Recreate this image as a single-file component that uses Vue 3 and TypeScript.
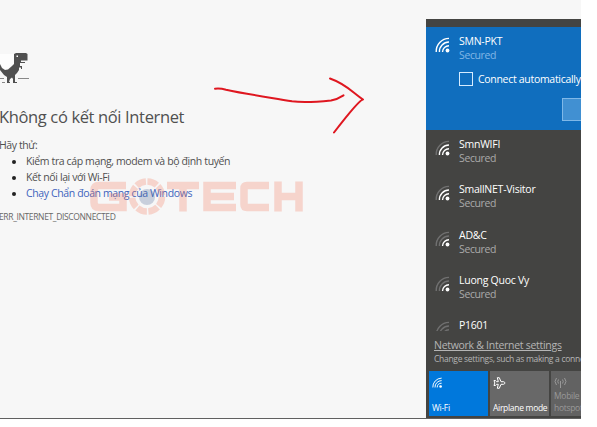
<script setup lang="ts">
interface Network { name: string; strength: number }
const networks: Network[] = [
  { name: 'SmnWIFI', strength: 3 },
  { name: 'SmallNET-Visitor', strength: 3 },
  { name: 'AD&C', strength: 2 },
  { name: 'Luong Quoc Vy', strength: 2 },
]
// Signal arcs, from the innermost to the outermost.
const arcs: string[] = [
  'M7.5 15A6.5 6.5 0 0 1 14 8.8',
  'M4.4 15A9.6 9.6 0 0 1 14 5',
  'M1.2 15A13 13 0 0 1 14 1.4',
]
</script>

<template>
  <main class="screen">
    <section class="page">
      <svg class="dino" width="30" height="34" viewBox="0 0 30 34">
        <path fill="#fdfdfd" d="M0 3H14V12L8 18L4 18L0 13Z" />
        <path fill="#505050" d="M16 2H26L27.500 3V9.500H21V11H25V12H20V15H22V18H21V16.500H19V19L17 22L15 24V31H17V32H13V28L12 26.500L10 28L9 31H10V32H7V26L4 24L0 19V13L2 17L5 19L8 18.500L12 15L14 13V3Z" />
        <path fill="#fff" d="M16.500 4.500H18V6H16.500Z" />
        <path fill="#888" d="M0 27h4v1H0zM18 27h11v1H18zM2 31h3v1H2z" />
      </svg>
      <h1 class="title">Không có kết nối Internet</h1>
      <p class="try">Hãy thử:</p>
      <ul class="tips">
        <li>Kiểm tra cáp mạng, modem và bộ định tuyến</li>
        <li>Kết nối lại với Wi-Fi</li>
        <li><a>Chạy Chẩn đoán mạng của Windows</a></li>
      </ul>
      <p class="code">ERR_INTERNET_DISCONNECTED</p>
    </section>

    <svg class="watermark" width="216" height="40" viewBox="0 0 216 40">
      <g fill="none" stroke="#f47b61" stroke-width="7.5">
        <path d="M37 8.500H10Q5 8.500 5 13.500V25.500Q5 30.500 10 30.500H34V20H20" />
        <circle cx="58" cy="19.500" r="15" stroke-width="6.500" stroke-dasharray="10.200 1.580" />
        <path d="M78 8.500H110M94 8.500V34.500M147 8.500H118V30.500H147M118 19.500H145M180 8.500H158Q155 8.500 155 11.500V27.500Q155 30.500 158 30.500H180M189 4.500V34.500M210 4.500V34.500M189 19.500H210" />
      </g>
      <circle cx="58" cy="20" r="8" />
    </svg>

    <svg class="arrow" width="152" height="60" viewBox="0 0 152 60" fill="none" stroke="#df1720" stroke-width="2" stroke-linecap="round" stroke-linejoin="round">
      <path d="M1 12.700Q6 12 12 13.700C34 18.500 56 21.500 78 25.300Q91 27.200 117 24.500Q123 23.500 129.500 19.300M116 2.500C132 8 138 16 149 23.500Q145 24 120 56.500" />
    </svg>

    <aside class="panel">
      <section class="current">
        <svg class="wifi" viewBox="0 0 16 17"><path v-for="d in arcs" :key="d" :d="d" class="on" /><circle cx="12.500" cy="13.500" r="1.900" /></svg>
        <div class="info">
          <b>SMN-PKT</b><small>Secured</small>
          <label><i></i><span class="auto">Connect automatically</span></label>
        </div>
        <span class="button"></span>
      </section>
      <div class="list">
        <section v-for="n in networks" :key="n.name" class="row">
          <svg class="wifi" viewBox="0 0 16 17"><path v-for="(d, i) in arcs" :key="d" :d="d" :class="i + 1 < n.strength ? 'on' : 'off'" /><circle cx="12.500" cy="13.500" r="1.900" /></svg>
          <div class="info"><b>{{ n.name }}</b><small>Secured</small></div>
        </section>
        <section class="row">
          <svg class="wifi" viewBox="0 0 16 17"><path v-for="d in arcs" :key="d" :d="d" class="off" /><circle cx="12.500" cy="13.500" r="1.900" /></svg>
          <div class="info"><b>P1601</b></div>
        </section>
      </div>
      <div class="settings"><a>Network &amp; Internet settings</a><p>Change settings, such as making a connection</p></div>
      <div class="tiles">
        <div class="tile active">
          <svg width="11" height="12" viewBox="0 0 16 17"><path v-for="d in arcs" :key="d" :d="d" class="on" /><circle cx="12.500" cy="13.500" r="1.900" /></svg>
          <span>Wi-Fi</span>
        </div>
        <div class="tile">
          <svg width="13" height="12" viewBox="0 0 13 12"><path d="M1 3.500H2.500L3.500 4.700H5.300L4.300 .7H6.300L8 4.700H10.500Q12 5.200 12 6T10.500 7.300H8L6.300 11.300H4.300L5.300 7.300H3.500L2.500 8.500H1L1.800 6Z" fill="none" stroke="#fff" stroke-width="1" /></svg>
          <span>Airplane mode</span>
        </div>
        <div class="tile disabled">
          <svg width="13" height="11" viewBox="0 0 13 11" fill="none" stroke="#999"><path d="M2.500 1Q-.5 4.500 2.500 8M4.500 2.500Q3 4.500 4.500 6.500M8.500 2.500Q10 4.500 8.500 6.500M10.500 1Q13.500 4.500 10.500 8M6.500 4V11" /></svg>
          <span>Mobile<br>hotspot</span>
        </div>
      </div>
    </aside>
  </main>
</template>

<style>
body { margin: 0; background: #fff; overflow: hidden; }
</style>
<style scoped>
* { box-sizing: border-box; }
.screen { position: relative; display: flex; justify-content: space-between; width: 581px; height: 419px; overflow: hidden; background: #f7f7f7; border-bottom: 1px solid #606060; font-family: "Open Sans", "Noto Sans", sans-serif; white-space: nowrap; }
.page { padding-top: 51px; color: #505050; }
.page p, h1, ul { margin: 0; padding: 0; }
.dino { display: block; }
.page .title { padding-top: 20px; margin-left: -1px; font-size: 16.500px; line-height: 24px; font-weight: 400; letter-spacing: -.36px; }
.page .try { padding-top: 8px; margin-left: -1px; font-size: 10.500px; line-height: 16px; letter-spacing: -.4px; }
.page .tips { padding-left: 26px; font-size: 10.500px; line-height: 16px; letter-spacing: -.38px; }
.tips li::marker { color: #222; }
.tips a { color: #4064bd; }
.page .code { padding-top: 9px; margin-left: -1px; font-size: 8.500px; line-height: 14px; letter-spacing: -.36px; color: #686868; }
.watermark { position: absolute; left: 89px; top: 177px; opacity: .28; }
.arrow { position: absolute; left: 214px; top: 76px; }
.panel { width: 155px; height: 399px; margin-top: 19px; padding-top: 8px; display: flex; flex-direction: column; flex: none; overflow: hidden; background: #444442; color: #fff; }
.current { height: 103px; flex: none; display: flex; padding: 7px 0 0 9px; background: #106ebe; overflow: hidden; position: relative; }
.wifi { width: 16px; height: 17px; flex: none; margin: 3px 8px 0 0; }
.panel circle { fill: #fff; }
.watermark > circle { fill: #526c9a; }
.on, .off { fill: none; stroke: #fff; stroke-width: 1.400; }
.off { stroke: #707070; }
.info { display: flex; flex-direction: column; font-size: 10.500px; }
.info b { font-weight: 400; line-height: 14px; letter-spacing: -.25px; }
.info small { font-size: 10.500px; line-height: 14px; letter-spacing: -.38px; color: #aaa; }
.info .auto { letter-spacing: -.3px; }
.current .info small { color: #82b7e6; }
label { display: flex; align-items: center; gap: 5px; margin-top: 9px; height: 15px; font-size: 10.500px; }
label i { width: 14px; height: 14px; border: 1px solid #d6ecff; }
.button { position: absolute; right: -60px; bottom: 9px; width: 79px; height: 23px; background: #4190d2; border: 1px solid #7fb8e8; }
.list { height: 201px; padding-top: 7px; flex: none; overflow: hidden; }
.row { display: flex; height: 45.300px; padding-left: 9px; }
.settings { height: 40px; flex: none; padding: 8px 0 0 8px; color: #b5b5b5; }
.settings a { display: block; font-size: 10.500px; line-height: 13px; text-decoration: underline; letter-spacing: -.28px; }
.settings p { margin: 0; font-size: 8.500px; line-height: 13px; letter-spacing: -.29px; }
.tiles { display: flex; gap: 2px; padding-left: 3px; height: 45px; }
.tile { flex: 0 0 59px; height: 45px; display: flex; flex-direction: column; justify-content: space-between; align-items: flex-start; padding: 6px 0 2px 3px; background: #686868; font-size: 8.500px; line-height: 12px; }
.tile span { letter-spacing: -.3px; }
.active { background: #0078dc; }
.disabled { color: #999; background: #626262; }
</style>
